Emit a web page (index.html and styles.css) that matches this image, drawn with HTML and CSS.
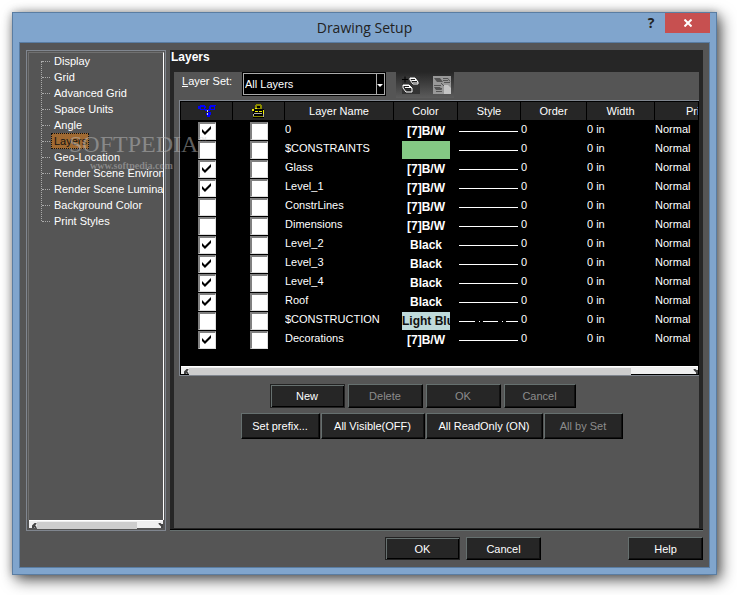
FILE: index.html
```html
<!DOCTYPE html>
<html lang="en">
<head>
<meta charset="utf-8">
<title>Drawing Setup</title>
<link rel="stylesheet" href="styles.css">
</head>
<body>
<div class="window">
  <header class="titlebar">
    <h1>Drawing Setup</h1>
    <div class="caption-buttons">
      <button class="help" aria-label="Help">?</button>
      <button class="close" aria-label="Close"><svg width="8" height="8" viewBox="0 0 8 8"><path d="M0.5 0.5 7.5 7.5M7.5 0.5 0.5 7.5" stroke="#fff" stroke-width="2"/></svg></button>
    </div>
  </header>
  <div class="client">
    <div class="columns">
      <nav class="tree">
        <ul>
          <li><a href="#">Display</a></li>
          <li><a href="#">Grid</a></li>
          <li><a href="#">Advanced Grid</a></li>
          <li><a href="#">Space Units</a></li>
          <li><a href="#">Angle</a></li>
          <li><a href="#" class="active">Layers</a></li>
          <li><a href="#">Geo-Location</a></li>
          <li><a href="#">Render Scene Environment</a></li>
          <li><a href="#">Render Scene Luminance</a></li>
          <li><a href="#">Background Color</a></li>
          <li><a href="#">Print Styles</a></li>
        </ul>
        <div class="scroll tree-scroll"><svg width="5" height="5" viewBox="0 0 5 5"><path d="M4 0 1 3v2M2 2 4 5"/></svg><i></i><svg width="5" height="5" viewBox="0 0 5 5"><path d="M1 0 4 3v2M4 1v3"/></svg></div>
      </nav>
      <main class="panel">
        <h2>Layers</h2>
        <div class="panel-body">
          <div class="toolbar">
            <label for="set"><u>L</u>ayer Set:</label>
            <div class="combo"><select id="set"><option>All Layers</option></select></div>
            <div class="tools">
              <button aria-label="New layer set"><svg width="18" height="18" viewBox="0 0 18 18"><path fill="#333" d="M0 0h18v18H0z"/><path d="M0 3.500h6M3 .5v6" stroke="#000" fill="none"/><g fill="#fff" stroke="#fff"><path d="M8 2h5l3 4h-5zM1 9h6l3 3H4z"/><path fill="none" d="M8 2v2l3 4h5V6M1 9v3l3 4h6v-4"/></g><path d="M9 3.500h4M10 5.500h5M2 10.500h5M3 12.500h6M5 14.500h4" stroke="#222"/></svg></button>
              <button aria-label="Delete layer set" disabled><svg width="18" height="18" viewBox="0 0 18 18"><path fill="#999" d="M0 0h18v18H0z"/><path fill="#555" d="M1 2h6l3 4H4zM1 11h6l2 3H3z"/><path d="M10 2.500h5l2 3M10 4.500h5M11 6.500h6M1 9.500h7M2 12.500h7M3 15.500h6M8 7l3 3" stroke="#555" fill="none"/><path fill="#c4c4c4" d="M11 9h4l3 3v6h-7z"/></svg></button>
            </div>
          </div>
          <div class="grid-frame">
            <div class="grid-view">
            <table>
              <colgroup><col class="c-flag"><col class="c-flag"><col class="c-name"><col class="c-color"><col class="c-style"><col class="c-order"><col class="c-width"><col class="c-print"></colgroup>
              <thead><tr>
                <th aria-label="Visible"><svg width="18" height="12" viewBox="0 0 18 12"><path fill="#00f" fill-rule="evenodd" d="M2 0h5v1h1v2H7v2H2V4H0V1h2zM3 2v2h3V2zM12 0h6v1h-1v4h-5V4h-1V1h1zM13 2v2h3V2zM7 4h2v2H7zM10 4h2v2h-2zM8 8h2V7h3v3h-1v2H9v-2H8z"/><path fill="#ccc" d="M9 5h1v2H9zM9 8h1v2H9z"/></svg></th>
                <th aria-label="Read only"><svg width="14" height="14" viewBox="0 0 14 14"><path fill="#888800" d="M4 0h5v1h1v4H3V1h1z"/><path fill="#000" d="M5 2h3v2H5zM1 5h11v9H1z"/><path fill="#ee0" d="M0 5h3V4h2v1H2v2H0zM3 7h3v1H3zM7 7h3v1H7zM11 6h1v4h-1z"/><path fill="#880" d="M1 12h11v1H1z"/><path fill="#aaa" d="M2 9h8v1H2zM1 10h1v2H1zM11 10h1v3h-1z"/></svg></th>
                <th>Layer Name</th><th>Color</th><th>Style</th><th>Order</th><th>Width</th><th>Print Style</th>
              </tr></thead>
              <tbody>
                <tr><td><input type="checkbox" aria-label="Visible" checked></td><td><input type="checkbox" aria-label="Read only"></td><td>0</td><td><b>[7]B/W</b></td><td><hr></td><td>0</td><td>0 in</td><td>Normal</td></tr>
                <tr><td><input type="checkbox" aria-label="Visible"></td><td><input type="checkbox" aria-label="Read only"></td><td>$CONSTRAINTS</td><td><b class="green"></b></td><td><hr></td><td>0</td><td>0 in</td><td>Normal</td></tr>
                <tr><td><input type="checkbox" aria-label="Visible" checked></td><td><input type="checkbox" aria-label="Read only"></td><td>Glass</td><td><b>[7]B/W</b></td><td><hr></td><td>0</td><td>0 in</td><td>Normal</td></tr>
                <tr><td><input type="checkbox" aria-label="Visible" checked></td><td><input type="checkbox" aria-label="Read only"></td><td>Level_1</td><td><b>[7]B/W</b></td><td><hr></td><td>0</td><td>0 in</td><td>Normal</td></tr>
                <tr><td><input type="checkbox" aria-label="Visible"></td><td><input type="checkbox" aria-label="Read only"></td><td>ConstrLines</td><td><b>[7]B/W</b></td><td><hr></td><td>0</td><td>0 in</td><td>Normal</td></tr>
                <tr><td><input type="checkbox" aria-label="Visible"></td><td><input type="checkbox" aria-label="Read only"></td><td>Dimensions</td><td><b>[7]B/W</b></td><td><hr></td><td>0</td><td>0 in</td><td>Normal</td></tr>
                <tr><td><input type="checkbox" aria-label="Visible" checked></td><td><input type="checkbox" aria-label="Read only"></td><td>Level_2</td><td><b>Black</b></td><td><hr></td><td>0</td><td>0 in</td><td>Normal</td></tr>
                <tr><td><input type="checkbox" aria-label="Visible" checked></td><td><input type="checkbox" aria-label="Read only"></td><td>Level_3</td><td><b>Black</b></td><td><hr></td><td>0</td><td>0 in</td><td>Normal</td></tr>
                <tr><td><input type="checkbox" aria-label="Visible" checked></td><td><input type="checkbox" aria-label="Read only"></td><td>Level_4</td><td><b>Black</b></td><td><hr></td><td>0</td><td>0 in</td><td>Normal</td></tr>
                <tr><td><input type="checkbox" aria-label="Visible" checked></td><td><input type="checkbox" aria-label="Read only"></td><td>Roof</td><td><b>Black</b></td><td><hr></td><td>0</td><td>0 in</td><td>Normal</td></tr>
                <tr><td><input type="checkbox" aria-label="Visible"></td><td><input type="checkbox" aria-label="Read only"></td><td>$CONSTRUCTION</td><td><b class="blue">Light Blue</b></td><td><hr class="dashdot"></td><td>0</td><td>0 in</td><td>Normal</td></tr>
                <tr><td><input type="checkbox" aria-label="Visible" checked></td><td><input type="checkbox" aria-label="Read only"></td><td>Decorations</td><td><b>[7]B/W</b></td><td><hr></td><td>0</td><td>0 in</td><td>Normal</td></tr>
              </tbody>
            </table>
            </div>
            <div class="scroll grid-scroll"><svg width="5" height="5" viewBox="0 0 5 5"><path d="M4 0 1 3v2M2 2 4 5"/></svg><i></i><svg width="5" height="5" viewBox="0 0 5 5"><path d="M1 0 4 3v2M4 1v3"/></svg></div>
          </div>
          <div class="actions edit">
            <button class="btn default">New</button><button class="btn" disabled>Delete</button><button class="btn" disabled>OK</button><button class="btn narrow" disabled>Cancel</button>
          </div>
          <div class="actions bulk">
            <button class="btn">Set prefix...</button><button class="btn wide">All Visible(OFF)</button><button class="btn wider">All ReadOnly (ON)</button><button class="btn" disabled>All by Set</button>
          </div>
        </div>
      </main>
    </div>
    <footer>
      <button class="btn default">OK</button><button class="btn">Cancel</button><button class="btn end">Help</button>
    </footer>
  </div>
  <div class="watermark" aria-hidden="true"><span class="brand">SOFTPEDIA<sup>™</sup></span><span class="site">www.softpedia.com</span></div>
</div>
</body>
</html>
```
FILE: styles.css
```css
* { box-sizing: border-box; }
body {
  margin: 0;
  min-height: 100vh;
  padding: 12px 20px 20px 12px;
  display: flex;
  background: #fff;
  color: #fff;
  font: 11px/16px "Liberation Sans", Arial, sans-serif;
}
button, select, input { font: inherit; color: inherit; margin: 0; padding: 0; border: 0; }
h1, h2, ul { margin: 0; padding: 0; font-weight: normal; }

.window {
  position: relative;
  flex: 1;
  min-width: 0;
  display: flex;
  flex-direction: column;
  padding: 0 6px 6px;
  border: 1px solid #5a7da2;
  background: #80a5cd;
  box-shadow: 4px 5px 14px rgba(0, 0, 0, .65), 0 0 8px rgba(0, 0, 0, .25);
}
.titlebar { position: relative; height: 29px; }
.titlebar h1 {
  font: 14px/30px "Open Sans", sans-serif;
  color: #222;
  text-align: center;
}
.caption-buttons { position: absolute; top: 0; right: 0; display: flex; }
.caption-buttons button { height: 20px; background: none; }
.help { width: 28px; color: #222; font: bold 14px/20px "Open Sans", sans-serif; }
.caption-buttons .close { width: 45px; background: #c75050; }

.client {
  flex: 1;
  display: flex;
  flex-direction: column;
  padding: 7px 6px;
  border: 1px solid #5a7da2;
  background: #555;
}
.columns { flex: 1; display: grid; grid-template-columns: 140px minmax(0, 1fr); gap: 4px; }

.tree {
  display: flex;
  flex-direction: column;
  justify-content: space-between;
  overflow: hidden;
  padding: 1px;
  border: 1px solid #80868f;
}
.tree ul {
  position: relative;
  flex: 1;
  list-style: none;
  overflow: hidden;
  padding: 0 0 0 22px;
  border: 1px solid #707070;
  border-right-color: #fff;
  border-bottom: 0;
}
.tree ul::before {
  content: "";
  position: absolute;
  left: 12px;
  top: 8px;
  height: 160px;
  border-left: 1px dotted #aaa;
}
.tree li { position: relative; height: 16px; white-space: nowrap; }
.tree li::before {
  content: "";
  position: absolute;
  left: -9px;
  top: 8px;
  width: 8px;
  border-top: 1px dotted #aaa;
}
.tree a { display: inline-block; padding: 0 2px 0 3px; color: #fff; text-decoration: none; }
.tree .active { background: #a06a32; color: #111; outline: 1px dotted #111; outline-offset: -1px; }

.scroll { display: flex; align-items: center; height: 8px; padding: 1px 0 0 3px; background: #efefef; border-top: 1px solid #fff; }
.scroll i { height: 7px; background: #cdcdcd; }
.scroll svg { flex: none; fill: none; stroke: #444; stroke-width: 2; }
.scroll svg:last-child { margin-left: auto; }
.tree-scroll { margin: 0 1px 1px; }
.tree-scroll i { width: 76%; }
.grid-scroll i { width: 86%; }

.panel {
  display: flex;
  flex-direction: column;
  min-width: 0;
  padding: 0 4px 2px;
  background: #262626;
  border-bottom: 1px solid #66706f;
  box-shadow: inset 0 -1px #000;
}
.panel h2 { height: 22px; margin-left: -3px; font-size: 12px; line-height: 15px; font-weight: bold; }
.panel-body { flex: 1; background: #555; }
.toolbar { display: flex; height: 28px; padding-left: 8px; }
.toolbar label { width: 60px; line-height: 19px; }
.combo { position: relative; width: 144px; height: 24px; border: 1px solid #000; }
.combo select {
  appearance: none;
  width: 100%;
  height: 100%;
  padding-left: 1px;
  border: 1px solid #aaa;
  border-radius: 0;
  background: #000;
}
.combo::after {
  content: "";
  position: absolute;
  top: 11px;
  right: 2px;
  border: 3px solid transparent;
  border-top-color: #fff;
  border-bottom: 0;
  pointer-events: none;
}
.combo::before {
  content: "";
  position: absolute;
  top: 1px;
  right: 8px;
  bottom: 1px;
  border-left: 1px solid #aaa;
}
.tools {
  display: flex;
  align-items: center;
  gap: 13px;
  width: 58px;
  height: 26px;
  margin-left: 10px;
  padding-left: 6px;
  background: linear-gradient(#262626, #5c5c5c);
}
.tools button { height: 18px; width: 18px; background: none; }
.tools svg, .grid-frame svg { display: block; }

.grid-frame { margin-left: 5px; border: 1px solid #80868f; border-right: 0; background: #000; padding: 1px; }
.grid-view { overflow: hidden; padding-bottom: 16px; }
table { table-layout: fixed; width: 100%; border-collapse: separate; border-spacing: 0; }
.c-flag { width: 52px; }
.c-name { width: 109px; }
.c-color { width: 64px; }
.c-style { width: 63px; }
.c-order { width: 66px; }
.c-width { width: 68px; }
th, td { padding: 0; white-space: nowrap; overflow: hidden; }
th { height: 20px; font-weight: normal; background: #262626; border-right: 1px solid #000; border-bottom: 2px solid #000; }
th svg { margin: auto; }
th:last-child { padding-left: 31px; text-align: left; border-right: 0; }
td { height: 19px; line-height: 15px; vertical-align: top; }
td:nth-child(-n+2) { text-align: center; }
td b {
  display: block;
  width: 48px;
  height: 18px;
  margin: 0 auto;
  overflow: hidden;
  font-size: 12px;
  line-height: 19px;
  text-align: center;
}
td .green { background: #84c884; }
td .blue { background: #bfdada; color: #111; text-align: left; }
hr { width: 59px; margin: 9px 0 0 1px; border: 0; height: 1px; background: #fff; }
.dashdot { background: linear-gradient(90deg, #fff 16px, #000 16px 20px, #fff 20px 21px, #000 21px 24px, #fff 24px 39px, #000 39px 43px, #fff 43px 44px, #000 44px 47px, #fff 47px); }

input[type="checkbox"] {
  appearance: none;
  display: block;
  width: 18px;
  height: 18px;
  margin: 0 auto;
  background: #fff;
  border: 2px solid #808080;
  border-right: 1px solid #ddd;
  border-bottom: 1px solid #ddd;
}
input:checked::before {
  content: "";
  display: block;
  width: 9px;
  height: 9px;
  margin: 2px;
  background: #000;
  clip-path: polygon(0 33%, 33% 66%, 100% 0, 100% 33%, 33% 100%, 0 66%);
}

.actions { display: flex; justify-content: center; }
.edit { gap: 3px; padding: 8px 28px 5px 0; }
.bulk { gap: 1px; padding-right: 10px; }
.btn {
  width: 75px;
  height: 24px;
  background: #262626;
  border: 1px solid #000;
  border-top-color: #66706f;
  border-left-color: #66706f;
  box-shadow: inset -1px -1px #111;
}
.btn:disabled { color: #8c8c8c; }
.btn.default { border-color: #222; box-shadow: inset 1px 1px #66706f, inset -1px -1px #000; }
.edit .narrow { width: 72px; }
.bulk .btn { width: 79px; height: 26px; }
.bulk .wide { width: 104px; }
.bulk .wider { width: 117px; }
footer { display: flex; gap: 6px; padding-top: 6px; padding-left: 359px; }
footer .btn { height: 23px; }
footer .end { margin-left: auto; }

.watermark {
  position: absolute;
  left: 56px;
  top: 118px;
  display: flex;
  flex-direction: column;
  color: rgba(190, 190, 190, .5);
  pointer-events: none;
}
.brand { font: 24px/26px "Liberation Serif", serif; white-space: nowrap; }
.brand sup { font-size: 9px; line-height: 9px; }
.site { padding-left: 21px; font: bold 10px/18px "Liberation Serif", serif; }
```
